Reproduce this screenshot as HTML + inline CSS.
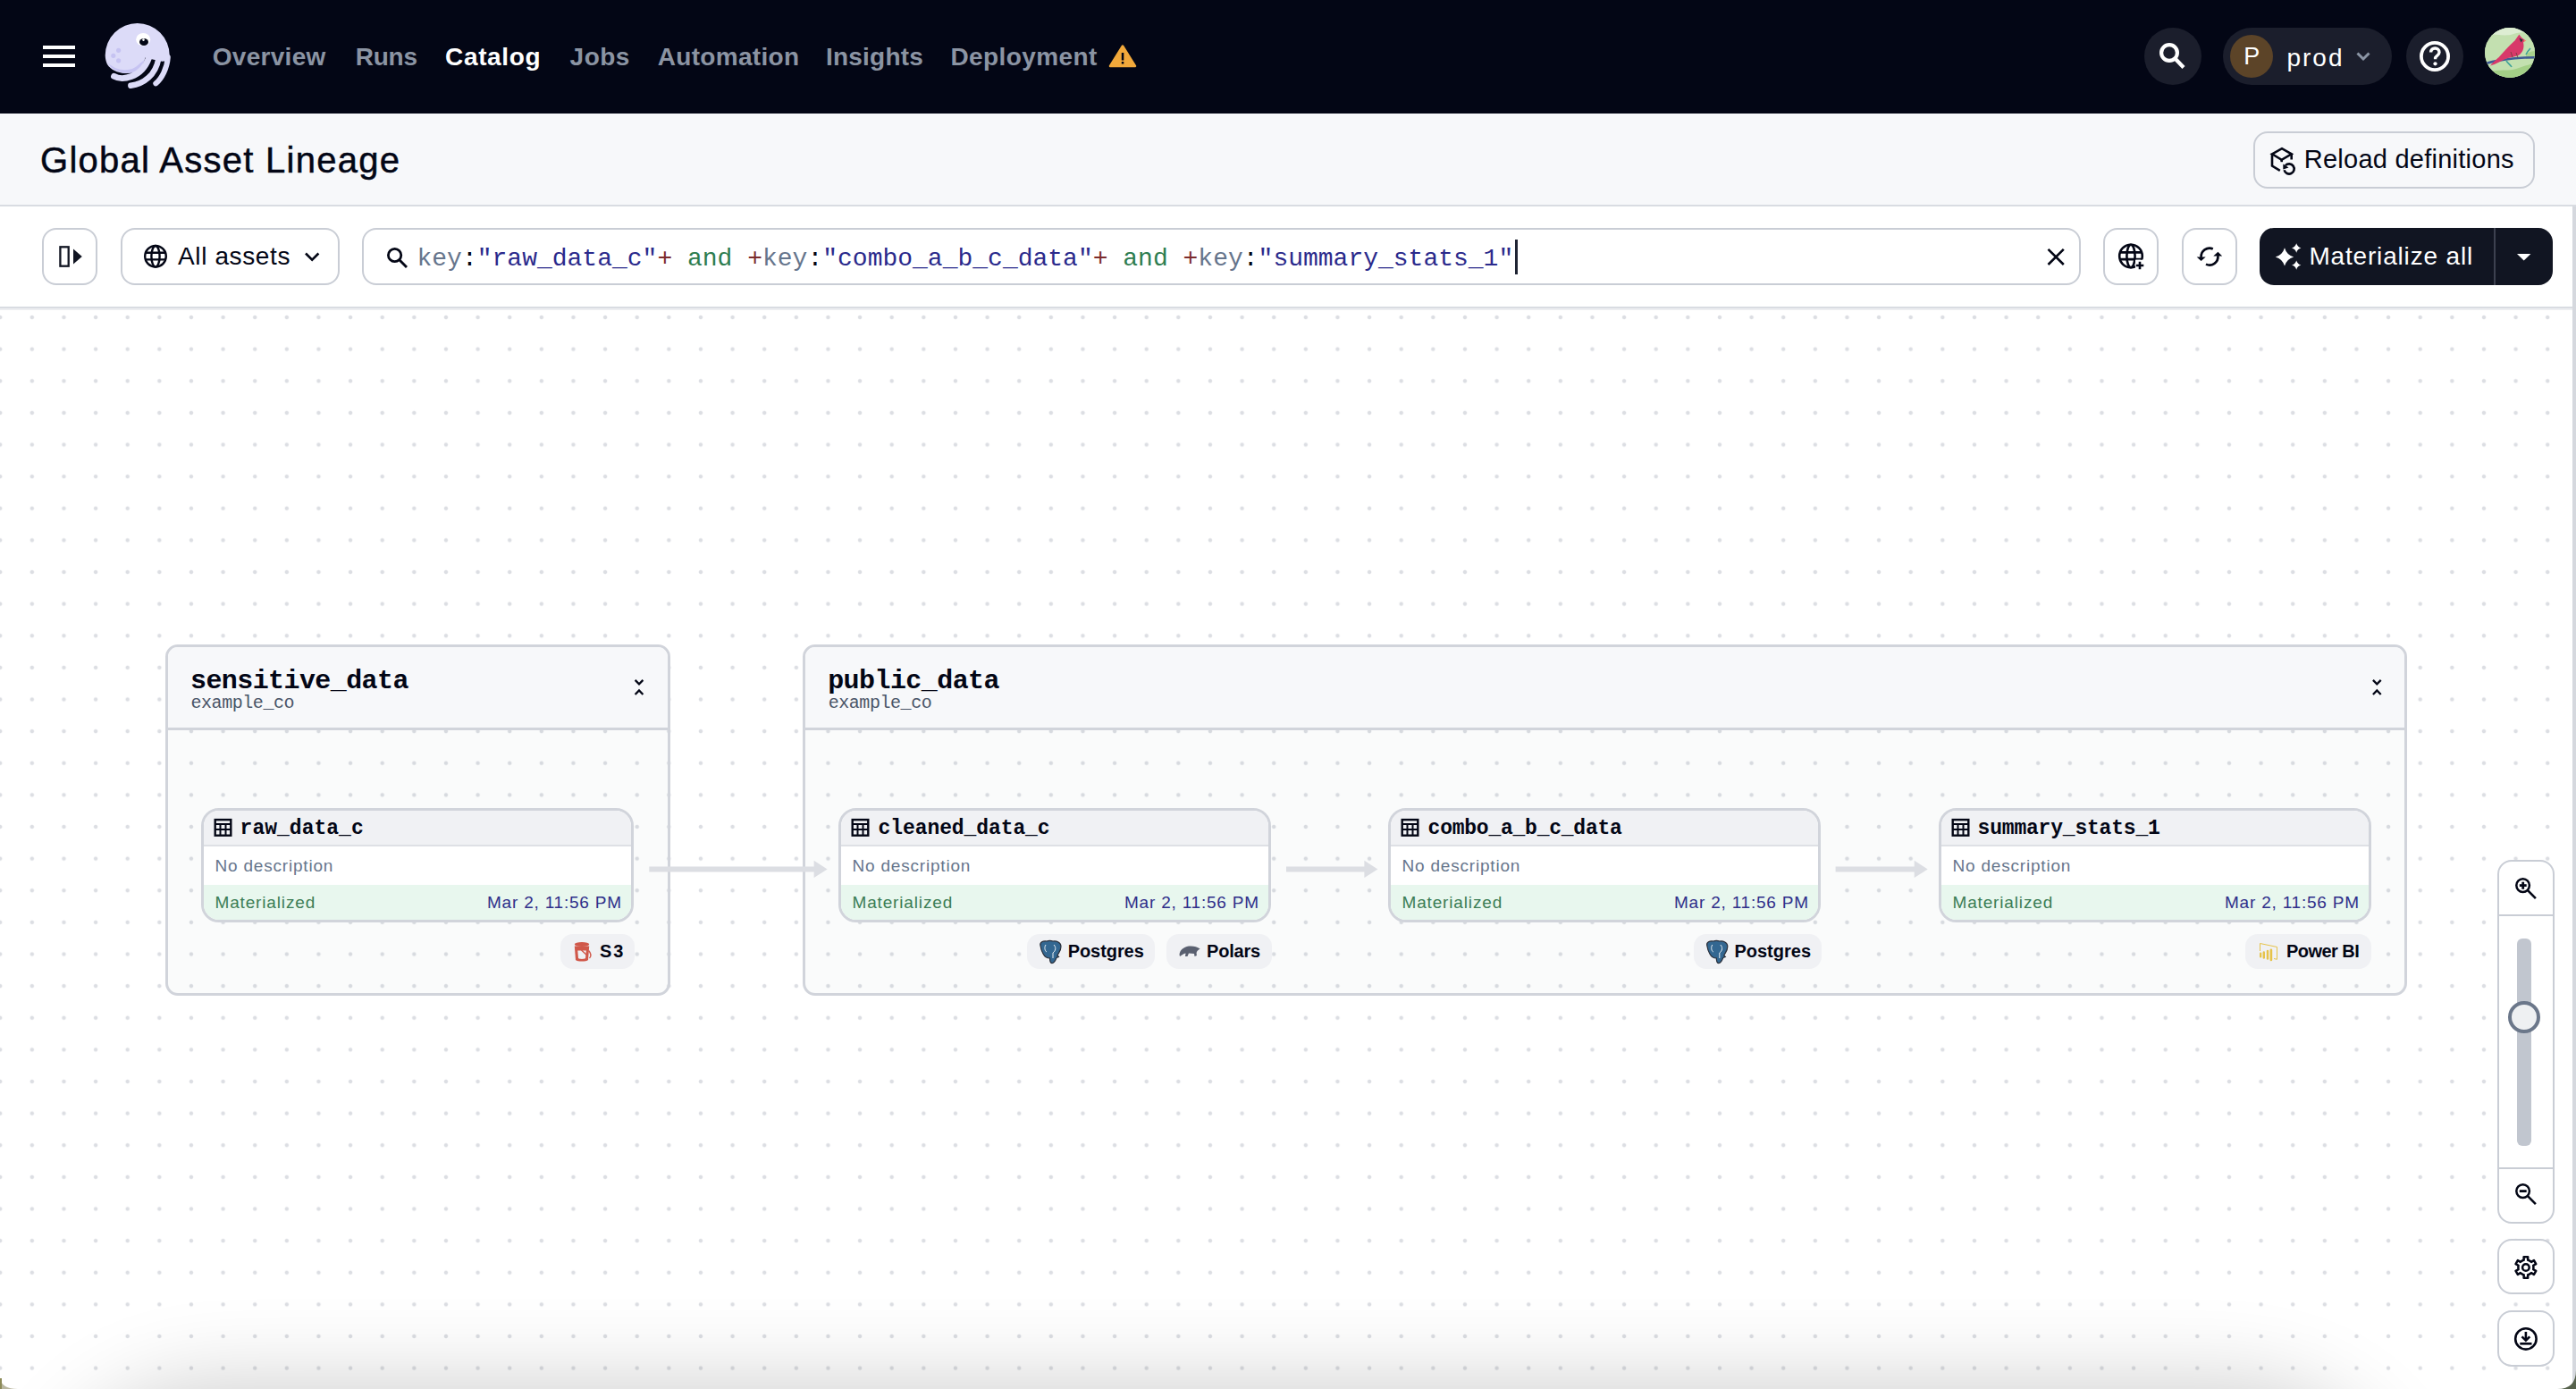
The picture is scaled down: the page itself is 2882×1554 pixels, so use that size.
<!DOCTYPE html><html><head><meta charset="utf-8"><style>
*{margin:0;padding:0;box-sizing:border-box}
html,body{width:2882px;height:1554px;overflow:hidden;background:#fff}
.t{position:absolute;white-space:pre}
.a{position:absolute}
</style></head><body>
<div class="a" style="left:0;top:0;width:2882px;height:127px;background:#030615"></div><div class="a" style="left:48px;top:51px;width:36px;height:4px;background:#fff"></div><div class="a" style="left:48px;top:61px;width:36px;height:4px;background:#fff"></div><div class="a" style="left:48px;top:71px;width:36px;height:4px;background:#fff"></div><div class="t" style="left:237.70px;top:50.29px;font-family:'Liberation Sans', sans-serif;font-weight:700;font-size:28px;line-height:28px;letter-spacing:0.300px;color:#8B94A3;">Overview</div><div class="t" style="left:397.70px;top:50.29px;font-family:'Liberation Sans', sans-serif;font-weight:700;font-size:28px;line-height:28px;letter-spacing:-0.233px;color:#8B94A3;">Runs</div><div class="t" style="left:498.00px;top:50.29px;font-family:'Liberation Sans', sans-serif;font-weight:700;font-size:28px;line-height:28px;letter-spacing:0.667px;color:#fff;">Catalog</div><div class="t" style="left:637.60px;top:50.29px;font-family:'Liberation Sans', sans-serif;font-weight:700;font-size:28px;line-height:28px;letter-spacing:0.467px;color:#8B94A3;">Jobs</div><div class="t" style="left:735.70px;top:50.29px;font-family:'Liberation Sans', sans-serif;font-weight:700;font-size:28px;line-height:28px;letter-spacing:0.322px;color:#8B94A3;">Automation</div><div class="t" style="left:924.00px;top:50.29px;font-family:'Liberation Sans', sans-serif;font-weight:700;font-size:28px;line-height:28px;letter-spacing:0.214px;color:#8B94A3;">Insights</div><div class="t" style="left:1063.50px;top:50.29px;font-family:'Liberation Sans', sans-serif;font-weight:700;font-size:28px;line-height:28px;letter-spacing:0.389px;color:#8B94A3;">Deployment</div><div class="a" style="left:2399px;top:31px;width:64px;height:64px;border-radius:32px;background:#1B1E2C"></div><div class="a" style="left:2487px;top:31px;width:189px;height:64px;border-radius:32px;background:#1B1E2C"></div><div class="a" style="left:2495px;top:39px;width:48px;height:48px;border-radius:24px;background:#5C4428"></div><div class="t" style="left:2510.30px;top:50.34px;font-family:'Liberation Sans', sans-serif;font-weight:400;font-size:27px;line-height:27px;letter-spacing:0.000px;color:#fff;">P</div><div class="t" style="left:2558.40px;top:50.89px;font-family:'Liberation Sans', sans-serif;font-weight:400;font-size:28px;line-height:28px;letter-spacing:2.033px;color:#fff;">prod</div><div class="a" style="left:2692px;top:31px;width:64px;height:64px;border-radius:32px;background:#1B1E2C"></div><div class="a" style="left:2780px;top:31px;width:56px;height:56px;border-radius:28px;background:radial-gradient(circle at 40% 30%,#DDEBD2 0,#C3E0B0 45%,#A6D08A 100%);overflow:hidden"></div><div class="a" style="left:0;top:127px;width:2882px;height:102px;background:#F7F8FA"></div><div class="a" style="left:0;top:229px;width:2882px;height:2px;background:#D9DCE2"></div><div class="t" style="left:45.00px;top:159.13px;font-family:'Liberation Sans', sans-serif;font-weight:400;font-size:40px;line-height:40px;letter-spacing:1.263px;color:#030615;-webkit-text-stroke:0.5px #030615;">Global Asset Lineage</div><div class="a" style="left:2521px;top:147px;width:315px;height:64px;border:2px solid #C9CDD5;border-radius:16px"></div><div class="t" style="left:2577.80px;top:164.45px;font-family:'Liberation Sans', sans-serif;font-weight:400;font-size:29px;line-height:29px;letter-spacing:0.247px;color:#030615;">Reload definitions</div><div class="a" style="left:0;top:343px;width:2882px;height:2px;background:#D9DCE2"></div><div class="a" style="left:0;top:345px;width:2882px;height:2px;background:#EDEEF1"></div><div class="a" style="left:46.5px;top:255px;width:62.5px;height:64px;border:2px solid #C9CDD5;border-radius:16px;background:#fff"></div><div class="a" style="left:134.5px;top:255px;width:245.5px;height:64px;border:2px solid #C9CDD5;border-radius:16px;background:#fff"></div><div class="a" style="left:405px;top:255px;width:1922.5px;height:64px;border:2px solid #C9CDD5;border-radius:16px;background:#fff"></div><div class="a" style="left:2353px;top:255px;width:62px;height:64px;border:2px solid #C9CDD5;border-radius:16px;background:#fff"></div><div class="a" style="left:2440.6px;top:255px;width:62.40000000000009px;height:64px;border:2px solid #C9CDD5;border-radius:16px;background:#fff"></div><div class="a" style="left:2528px;top:255px;width:328px;height:64px;border-radius:16px;background:#111522"></div><div class="a" style="left:2790px;top:255px;width:2px;height:64px;background:#3D4150"></div><div class="t" style="left:199.00px;top:273.19px;font-family:'Liberation Sans', sans-serif;font-weight:400;font-size:28px;line-height:28px;letter-spacing:0.622px;color:#030615;">All assets</div><div class="t" style="left:2583.40px;top:273.19px;font-family:'Liberation Sans', sans-serif;font-weight:400;font-size:28px;line-height:28px;letter-spacing:0.829px;color:#fff;">Materialize all</div><div class="t" style="left:466.50px;top:275.55px;font-family:'Liberation Mono', monospace;font-size:28px;line-height:28px"><span style="color:#66758C">key</span><span style="color:#030615">:</span><span style="color:#2B2A8C">"raw_data_c"</span><span style="color:#7C2C2C">+</span><span style="color:#2E7D50"> and </span><span style="color:#7C2C2C">+</span><span style="color:#66758C">key</span><span style="color:#030615">:</span><span style="color:#2B2A8C">"combo_a_b_c_data"</span><span style="color:#7C2C2C">+</span><span style="color:#2E7D50"> and </span><span style="color:#7C2C2C">+</span><span style="color:#66758C">key</span><span style="color:#030615">:</span><span style="color:#2B2A8C">"summary_stats_1"</span></div><div class="a" style="left:1695px;top:268px;width:2.5px;height:39px;background:#1F2433"></div><div class="a" style="left:0;top:345px;width:2882px;height:1209px;background-image:radial-gradient(circle at center,#DCDEE3 0,#DCDEE3 1.7px,rgba(220,222,227,0) 2.7px);background-size:35.64px 35.64px;background-position:-17.62px -7.82px"></div><div class="a" style="left:2878px;top:231px;width:4px;height:1323px;background:#D5D8DE"></div><div class="a" style="left:184.5px;top:720.5px;width:565.5px;height:393.0px;border:3px solid #D1D4DB;border-radius:14px;background:rgba(20,30,60,0.018);overflow:hidden"><div class="a" style="left:0;top:0;right:0;height:93.5px;background:#F7F8FA;border-bottom:3px solid #D1D4DB"></div></div><div class="t" style="left:213.00px;top:746.52px;font-family:'Liberation Mono', monospace;font-weight:700;font-size:30px;line-height:30px;letter-spacing:-0.585px;color:#030615;">sensitive_data</div><div class="t" style="left:213.50px;top:776.68px;font-family:'Liberation Mono', monospace;font-weight:400;font-size:20px;line-height:20px;letter-spacing:-0.444px;color:#4A5568;">example_co</div><div class="a" style="left:897.7px;top:720.5px;width:1795.3px;height:393.0px;border:3px solid #D1D4DB;border-radius:14px;background:rgba(20,30,60,0.018);overflow:hidden"><div class="a" style="left:0;top:0;right:0;height:93.5px;background:#F7F8FA;border-bottom:3px solid #D1D4DB"></div></div><div class="t" style="left:926.20px;top:746.52px;font-family:'Liberation Mono', monospace;font-weight:700;font-size:30px;line-height:30px;letter-spacing:-0.570px;color:#030615;">public_data</div><div class="t" style="left:926.70px;top:776.68px;font-family:'Liberation Mono', monospace;font-weight:400;font-size:20px;line-height:20px;letter-spacing:-0.444px;color:#4A5568;">example_co</div><div class="a" style="left:225px;top:904px;width:484px;height:128px;border:3px solid #D1D4DB;border-radius:20px;background:#fff;overflow:hidden"><div class="a" style="left:0;top:0;right:0;height:40px;background:#F0F1F4;border-bottom:2px solid #DEE0E5"></div><div class="a" style="left:0;top:82.5px;right:0;bottom:0;background:#E8F7EE"></div></div><div class="t" style="left:268.60px;top:916.38px;font-family:'Liberation Mono', monospace;font-weight:700;font-size:23px;line-height:23px;letter-spacing:0.011px;color:#030615;">raw_data_c</div><div class="t" style="left:240.50px;top:958.91px;font-family:'Liberation Sans', sans-serif;font-weight:400;font-size:19px;line-height:19px;letter-spacing:0.800px;color:#66758C;">No description</div><div class="t" style="left:240.50px;top:999.91px;font-family:'Liberation Sans', sans-serif;font-weight:400;font-size:19px;line-height:19px;letter-spacing:0.845px;color:#3B7D55;">Materialized</div><div class="t" style="left:545.00px;top:999.91px;font-family:'Liberation Sans', sans-serif;font-weight:400;font-size:19px;line-height:19px;letter-spacing:0.786px;color:#2F2F8A;">Mar 2, 11:56 PM</div><div class="a" style="left:627.3px;top:1045px;width:82.70000000000005px;height:39px;border-radius:14px;background:#F0F1F4"></div><div class="t" style="left:671.00px;top:1054.07px;font-family:'Liberation Sans', sans-serif;font-weight:700;font-size:20px;line-height:20px;letter-spacing:2.000px;color:#030615;">S3</div><div class="a" style="left:938px;top:904px;width:484px;height:128px;border:3px solid #D1D4DB;border-radius:20px;background:#fff;overflow:hidden"><div class="a" style="left:0;top:0;right:0;height:40px;background:#F0F1F4;border-bottom:2px solid #DEE0E5"></div><div class="a" style="left:0;top:82.5px;right:0;bottom:0;background:#E8F7EE"></div></div><div class="t" style="left:982.60px;top:916.38px;font-family:'Liberation Mono', monospace;font-weight:700;font-size:23px;line-height:23px;letter-spacing:-0.092px;color:#030615;">cleaned_data_c</div><div class="t" style="left:953.50px;top:958.91px;font-family:'Liberation Sans', sans-serif;font-weight:400;font-size:19px;line-height:19px;letter-spacing:0.800px;color:#66758C;">No description</div><div class="t" style="left:953.50px;top:999.91px;font-family:'Liberation Sans', sans-serif;font-weight:400;font-size:19px;line-height:19px;letter-spacing:0.845px;color:#3B7D55;">Materialized</div><div class="t" style="left:1258.00px;top:999.91px;font-family:'Liberation Sans', sans-serif;font-weight:400;font-size:19px;line-height:19px;letter-spacing:0.786px;color:#2F2F8A;">Mar 2, 11:56 PM</div><div class="a" style="left:1149.2px;top:1045px;width:142.79999999999995px;height:39px;border-radius:14px;background:#F0F1F4"></div><div class="t" style="left:1194.70px;top:1054.07px;font-family:'Liberation Sans', sans-serif;font-weight:700;font-size:20px;line-height:20px;letter-spacing:-0.071px;color:#030615;">Postgres</div><div class="a" style="left:1305px;top:1045px;width:118px;height:39px;border-radius:14px;background:#F0F1F4"></div><div class="t" style="left:1350.00px;top:1054.07px;font-family:'Liberation Sans', sans-serif;font-weight:700;font-size:20px;line-height:20px;letter-spacing:-0.200px;color:#030615;">Polars</div><div class="a" style="left:1553px;top:904px;width:484px;height:128px;border:3px solid #D1D4DB;border-radius:20px;background:#fff;overflow:hidden"><div class="a" style="left:0;top:0;right:0;height:40px;background:#F0F1F4;border-bottom:2px solid #DEE0E5"></div><div class="a" style="left:0;top:82.5px;right:0;bottom:0;background:#E8F7EE"></div></div><div class="t" style="left:1597.60px;top:916.38px;font-family:'Liberation Mono', monospace;font-weight:700;font-size:23px;line-height:23px;letter-spacing:-0.240px;color:#030615;">combo_a_b_c_data</div><div class="t" style="left:1568.50px;top:958.91px;font-family:'Liberation Sans', sans-serif;font-weight:400;font-size:19px;line-height:19px;letter-spacing:0.800px;color:#66758C;">No description</div><div class="t" style="left:1568.50px;top:999.91px;font-family:'Liberation Sans', sans-serif;font-weight:400;font-size:19px;line-height:19px;letter-spacing:0.845px;color:#3B7D55;">Materialized</div><div class="t" style="left:1873.00px;top:999.91px;font-family:'Liberation Sans', sans-serif;font-weight:400;font-size:19px;line-height:19px;letter-spacing:0.786px;color:#2F2F8A;">Mar 2, 11:56 PM</div><div class="a" style="left:1895px;top:1045px;width:142.70000000000005px;height:39px;border-radius:14px;background:#F0F1F4"></div><div class="t" style="left:1940.40px;top:1054.07px;font-family:'Liberation Sans', sans-serif;font-weight:700;font-size:20px;line-height:20px;letter-spacing:0.014px;color:#030615;">Postgres</div><div class="a" style="left:2169px;top:904px;width:484px;height:128px;border:3px solid #D1D4DB;border-radius:20px;background:#fff;overflow:hidden"><div class="a" style="left:0;top:0;right:0;height:40px;background:#F0F1F4;border-bottom:2px solid #DEE0E5"></div><div class="a" style="left:0;top:82.5px;right:0;bottom:0;background:#E8F7EE"></div></div><div class="t" style="left:2212.60px;top:916.38px;font-family:'Liberation Mono', monospace;font-weight:700;font-size:23px;line-height:23px;letter-spacing:-0.200px;color:#030615;">summary_stats_1</div><div class="t" style="left:2184.50px;top:958.91px;font-family:'Liberation Sans', sans-serif;font-weight:400;font-size:19px;line-height:19px;letter-spacing:0.800px;color:#66758C;">No description</div><div class="t" style="left:2184.50px;top:999.91px;font-family:'Liberation Sans', sans-serif;font-weight:400;font-size:19px;line-height:19px;letter-spacing:0.845px;color:#3B7D55;">Materialized</div><div class="t" style="left:2489.00px;top:999.91px;font-family:'Liberation Sans', sans-serif;font-weight:400;font-size:19px;line-height:19px;letter-spacing:0.786px;color:#2F2F8A;">Mar 2, 11:56 PM</div><div class="a" style="left:2511.8px;top:1045px;width:140.79999999999973px;height:39px;border-radius:14px;background:#F0F1F4"></div><div class="t" style="left:2557.90px;top:1054.07px;font-family:'Liberation Sans', sans-serif;font-weight:700;font-size:20px;line-height:20px;letter-spacing:-0.529px;color:#030615;">Power BI</div><div class="a" style="left:0;top:1300px;width:2882px;height:254px;overflow:hidden"><div class="a" style="left:90px;top:290px;width:2560px;height:300px;border-radius:150px;background:#000;box-shadow:0 0 100px 40px rgba(0,0,0,0.2)"></div></div><div class="a" style="left:2794px;top:962px;width:64px;height:407px;border:2px solid #C9CDD5;border-radius:16px;background:#fff"></div><div class="a" style="left:2796px;top:1023px;width:60px;height:2px;background:#C9CDD5"></div><div class="a" style="left:2796px;top:1306px;width:60px;height:2px;background:#C9CDD5"></div><div class="a" style="left:2816px;top:1049.5px;width:16px;height:232px;border-radius:6px;background:#C1C6CF"></div><div class="a" style="left:2806px;top:1120px;width:36px;height:36px;border-radius:18px;background:#EEF0F2;border:4px solid #6B778A"></div><div class="a" style="left:2794px;top:1386px;width:64px;height:62px;border:2px solid #C9CDD5;border-radius:16px;background:#fff"></div><div class="a" style="left:2794px;top:1465.6px;width:64px;height:63.200000000000045px;border:2px solid #C9CDD5;border-radius:16px;background:#fff"></div>
<svg class="a" style="left:0;top:0" width="2882" height="1554" viewBox="0 0 2882 1554"><path d="M117.7 62 A36 36 0 0 1 189.7 62 L188 68 L181.3 68.8 L172 66.8 L162.5 64.5 C160 76 150 82.5 140 82 C131 81.5 124 78 120 72 C118.5 69 117.8 65 117.7 62 Z" fill="#DCDBF8"/><path d="M120.5 70 C126 80 138 83 148 81.5 C155 80 159 74 161.5 67 C157 70 154 74 149 76.5 C140 80 128 78 120.5 70 Z" fill="#C6C3F2"/><path d="M127.5 85.3 C136 90 158 88 166.5 65" fill="none" stroke="#DCDBF8" stroke-width="6.8" stroke-linecap="round"/><path d="M146.3 95.8 C161 94 174 84 177.3 66" fill="none" stroke="#DCDBF8" stroke-width="6.4" stroke-linecap="round"/><path d="M174.3 93.3 C181 88 187 76 187.8 64" fill="none" stroke="#DCDBF8" stroke-width="6" stroke-linecap="round"/><circle cx="132.6" cy="56.3" r="2.6" fill="#C6C3F2"/><circle cx="126.8" cy="62.3" r="2.6" fill="#C6C3F2"/><circle cx="132.6" cy="67.8" r="2.6" fill="#C6C3F2"/><ellipse cx="160.2" cy="44.2" rx="8" ry="7.2" fill="#fff"/><ellipse cx="161" cy="47" rx="5" ry="4" fill="#030615"/><circle cx="160.5" cy="44.6" r="1.3" fill="#fff"/><path d="M1256 51.5 L1270 74 L1242 74 Z" fill="#F2A93B" stroke="#F2A93B" stroke-width="2.5" stroke-linejoin="round"/><rect x="1254.8" y="59" width="2.5" height="8.5" fill="#030615"/><rect x="1254.8" y="69" width="2.5" height="2.5" fill="#030615"/><circle cx="2427" cy="59" r="8.9" fill="none" stroke="#fff" stroke-width="4.2"/><path d="M2433 65 L2443 75.5" stroke="#fff" stroke-width="4.3"/><path d="M2637.5 59.5 L2644 66 L2650.5 59.5" fill="none" stroke="#8B95A5" stroke-width="3"/><circle cx="2724" cy="63" r="15.1" fill="none" stroke="#fff" stroke-width="3.8"/><path d="M2719.6 58.6 C2719.6 55.5 2721.8 54 2724.3 54 C2727 54 2729 55.8 2729 58.4 C2729 61.5 2726 62 2724.6 64.5 L2724.6 66.3" fill="none" stroke="#fff" stroke-width="3.4"/><circle cx="2724.5" cy="71.3" r="2.1" fill="#fff"/><clipPath id="av"><circle cx="2808" cy="59" r="28"/></clipPath><g clip-path="url(#av)"><rect x="2780" y="31" width="56" height="56" fill="#C3E0B0"/><path d="M2780 40 C2792 36 2800 42 2812 38 C2822 35 2830 37 2836 33 L2836 31 L2780 31 Z" fill="#DDEDD3"/><path d="M2780 82 C2792 76 2806 81 2818 76 C2826 73 2832 72 2836 70 L2836 87 L2780 87 Z" fill="#A3CF87"/><path d="M2826 60 C2830 58 2834 57 2836 57 L2836 66 L2826 66 Z" fill="#A9D28E"/><path d="M2781 71 C2795 67 2815 64.5 2836 64.3" fill="none" stroke="#3D5A94" stroke-width="2.6"/><path d="M2786 73.5 C2789 70 2793 67 2797.5 62 C2803 56 2808 50 2813.5 45.5 L2818.4 38.6 L2821 42 L2825.3 45.2 L2823 47.5 C2824.5 53 2822.5 59 2817.5 62 C2811 64.5 2805 64.5 2800 67.5 C2795 70 2790 72.5 2786 73.5 Z" fill="#D8386A"/><path d="M2818.5 42.5 L2822.5 44.5 L2820.5 47.5 Z" fill="#1E3A3A"/><path d="M2824 44.5 L2826.5 45.5 L2823.5 47 Z" fill="#F08A6A"/><path d="M2809 58 L2811 64 M2815 59 L2817 64.5" stroke="#6B3A3A" stroke-width="0.8"/><path d="M2804 68 C2806 71 2809 73 2810 75 M2826 61 C2828 57 2830 55 2831 54" stroke="#3FA39A" stroke-width="1.6"/></g><g transform="translate(2540,165)" fill="none" stroke="#030615" stroke-width="2.6" stroke-linejoin="miter"><path d="M2 7.3 L13 1.2 L23.7 7.3 L12.7 13.8 Z"/><path d="M2 7.3 L2 20.6 L10.8 25.8"/><path d="M12.7 13.8 L12.7 16.2"/><path d="M23.7 7.3 L23.7 13.5"/><path d="M16.9 20.2 A5.6 5.6 0 1 1 15.6 25.2"/></g><path d="M2554.3 183.5 L2554.3 189.5 L2560.5 187.5 Z" fill="#030615"/><rect x="67.4" y="276.3" width="9.3" height="21.4" fill="none" stroke="#111522" stroke-width="2.3"/><path d="M82 278.4 L91.8 287 L82 295.6 Z" fill="#111522"/><g fill="none" stroke="#030615" stroke-width="2.4"><circle cx="174" cy="286.8" r="11.8"/><ellipse cx="174" cy="286.8" rx="4.6" ry="11.8"/><path d="M162.2 282.7 H185.8 M162.2 290.40000000000003 H185.8"/></g><path d="M342 283.5 L349.2 290.7 L356.4 283.5" fill="none" stroke="#030615" stroke-width="2.6"/><circle cx="441.6" cy="285.5" r="7.2" fill="none" stroke="#030615" stroke-width="2.75"/><path d="M446.8 290.8 L455 299" stroke="#030615" stroke-width="2.9"/><path d="M2291.5 278.8 L2308.8 296 M2308.8 278.8 L2291.5 296" stroke="#030615" stroke-width="2.6"/><clipPath id="gp"><path d="M2360 260 H2410 V290.5 H2389 V310 H2360 Z"/></clipPath><g clip-path="url(#gp)"><g fill="none" stroke="#030615" stroke-width="2.6"><circle cx="2384" cy="286.5" r="12.8"/><ellipse cx="2384" cy="286.5" rx="4.6" ry="12.8"/><path d="M2371.2 282.4 H2396.8 M2371.2 290.1 H2396.8"/></g></g><path d="M2389.8 297 H2398.3 M2394 292.8 V301.2" stroke="#030615" stroke-width="2.6"/><g fill="none" stroke="#030615" stroke-width="2.7"><path d="M2475.8 278.5 A9.4 9.4 0 0 0 2462.6 287.8"/><path d="M2481.4 286.2 A9.4 9.4 0 0 1 2468 295.6"/></g><path d="M2457.7 287.4 L2467.7 287.4 L2462.6 292 Z M2476.3 286.5 L2486.2 286.5 L2481.4 281.8 Z" fill="#030615"/><path d="M2556 277.2 Q2558.244 285.15599999999995 2566.2 287.4 Q2558.244 289.644 2556 297.59999999999997 Q2553.756 289.644 2545.8 287.4 Q2553.756 285.15599999999995 2556 277.2 Z M2569.2 272.3 Q2570.3439999999996 276.356 2574.3999999999996 277.5 Q2570.3439999999996 278.644 2569.2 282.7 Q2568.056 278.644 2564.0 277.5 Q2568.056 276.356 2569.2 272.3 Z M2569.2 291.40000000000003 Q2570.3439999999996 295.456 2574.3999999999996 296.6 Q2570.3439999999996 297.744 2569.2 301.8 Q2568.056 297.744 2564.0 296.6 Q2568.056 295.456 2569.2 291.40000000000003 Z" fill="#fff"/><path d="M2816 284 L2831.4 284 L2823.7 291.4 Z" fill="#fff"/><path d="M726.3 972.4 H912" stroke="#DCDEE3" stroke-width="6"/><path d="M910.6 962.8 L925.6 972.4 L910.6 982 Z" fill="#DCDEE3"/><path d="M1439 972.4 H1527" stroke="#DCDEE3" stroke-width="6"/><path d="M1526.4 962.8 L1541.4 972.4 L1526.4 982 Z" fill="#DCDEE3"/><path d="M2053.6 972.4 H2143" stroke="#DCDEE3" stroke-width="6"/><path d="M2141.7 962.8 L2156.7 972.4 L2141.7 982 Z" fill="#DCDEE3"/><g fill="none" stroke="#030615" stroke-width="2.3" transform="translate(0,0)"><path d="M710.6 760.9 L715 765.3 L719.4 760.9"/><path d="M710.6 777 L715 772.5 L719.4 777"/></g><g fill="none" stroke="#030615" stroke-width="2.3" transform="translate(1944.2999999999997,0)"><path d="M710.6 760.9 L715 765.3 L719.4 760.9"/><path d="M710.6 777 L715 772.5 L719.4 777"/></g><g transform="translate(239.5,915.9)"><rect x="1.2" y="1.2" width="17.6" height="17.6" fill="none" stroke="#030615" stroke-width="2.4"/><path d="M1 6.2 H19 M1 12.2 H19 M7 6 V19 M13 6 V19" stroke="#030615" stroke-width="2"/></g><g transform="translate(952.5,915.9)"><rect x="1.2" y="1.2" width="17.6" height="17.6" fill="none" stroke="#030615" stroke-width="2.4"/><path d="M1 6.2 H19 M1 12.2 H19 M7 6 V19 M13 6 V19" stroke="#030615" stroke-width="2"/></g><g transform="translate(1567.5,915.9)"><rect x="1.2" y="1.2" width="17.6" height="17.6" fill="none" stroke="#030615" stroke-width="2.4"/><path d="M1 6.2 H19 M1 12.2 H19 M7 6 V19 M13 6 V19" stroke="#030615" stroke-width="2"/></g><g transform="translate(2183.5,915.9)"><rect x="1.2" y="1.2" width="17.6" height="17.6" fill="none" stroke="#030615" stroke-width="2.4"/><path d="M1 6.2 H19 M1 12.2 H19 M7 6 V19 M13 6 V19" stroke="#030615" stroke-width="2"/></g><g fill="#D0584A"><ellipse cx="651" cy="1056.5" rx="8.2" ry="2.5"/><path d="M642.8 1058.5 L659.2 1058.5 L658 1074 C656 1076 646 1076 644 1074 Z"/></g><path d="M646.3 1063.5 L655.8 1063.5 L655 1072 C653 1073.2 649 1073.2 647 1072 Z" fill="#F0F1F4"/><path d="M650.5 1063 L657 1069 M658.5 1063.5 C661 1066 662 1070 659.5 1072" fill="none" stroke="#D0584A" stroke-width="1.5"/><g transform="translate(1162,1052)"><path d="M2 6 C1 2 5 0.5 9 1 C11 0.3 14 0.3 16 1 C20 0.5 25 2 25 7 C25 12 22 14 21 17 L22.5 18.5 L20 19.5 C19 22 18 25 15.5 25.5 C13 26 12.5 23 12.5 20 C10 20 7 19 5 15 C3 12 2.5 9 2 6 Z" fill="#336791" stroke="#2A2F3A" stroke-width="1.2"/><path d="M8 5 C6 8 7 12 9 13 M17 5 C20 8 19 12 16 14 L16 20" fill="none" stroke="#fff" stroke-width="0.9"/></g><g transform="translate(1907.8,1052)"><path d="M2 6 C1 2 5 0.5 9 1 C11 0.3 14 0.3 16 1 C20 0.5 25 2 25 7 C25 12 22 14 21 17 L22.5 18.5 L20 19.5 C19 22 18 25 15.5 25.5 C13 26 12.5 23 12.5 20 C10 20 7 19 5 15 C3 12 2.5 9 2 6 Z" fill="#336791" stroke="#2A2F3A" stroke-width="1.2"/><path d="M8 5 C6 8 7 12 9 13 M17 5 C20 8 19 12 16 14 L16 20" fill="none" stroke="#fff" stroke-width="0.9"/></g><path d="M1319.5 1068 C1320 1063 1324 1059.5 1330 1058.5 C1335 1058 1339 1059 1342.6 1061.5 L1340.5 1063 C1339 1064 1338 1066 1339 1069 L1336.5 1070 L1336 1067 L1330 1066.5 L1328.5 1070 L1326 1070 L1326.5 1066.5 C1324 1067 1322 1068.5 1320 1070 Z" fill="#5A6070"/><g fill="#E6C349"><rect x="2528" y="1065.5" width="2.3" height="6" rx="1.1"/><rect x="2531.6" y="1064.2" width="2.4" height="8.5" rx="1.2"/><rect x="2535.8" y="1062.8" width="2.4" height="11" rx="1.2"/><rect x="2539.6" y="1061.4" width="2.6" height="13.8" rx="1.3"/></g><path d="M2528.5 1064 V1055.5 L2547.5 1059.5 V1073.3 L2544 1072.5" fill="none" stroke="#E6C349" stroke-width="1"/><g fill="none" stroke="#030615" stroke-width="2.5"><circle cx="2822.6" cy="990.6" r="7.3"/><path d="M2828.0 996.2 L2836.9 1005.1" stroke-width="2.6"/><path d="M2818.7999999999997 990.6 H2826.7" stroke-width="2.8"/><path d="M2822.7 986.7 V994.8000000000001" stroke-width="2.8"/></g><g fill="none" stroke="#030615" stroke-width="2.5"><circle cx="2822.6" cy="1332.6" r="7.3"/><path d="M2828.0 1338.1999999999998 L2836.9 1347.1" stroke-width="2.6"/><path d="M2818.7999999999997 1332.6 H2826.7" stroke-width="2.8"/></g><path d="M2823.67 1409.69 L2823.61 1406.22 L2828.19 1406.22 L2828.13 1409.69 L2828.84 1409.92 L2831.43 1411.41 L2831.98 1411.92 L2834.96 1410.13 L2837.25 1414.09 L2834.21 1415.77 L2834.37 1416.51 L2834.37 1419.49 L2834.21 1420.23 L2837.25 1421.91 L2834.96 1425.87 L2831.98 1424.08 L2831.43 1424.59 L2828.84 1426.08 L2828.13 1426.31 L2828.19 1429.78 L2823.61 1429.78 L2823.67 1426.31 L2822.96 1426.08 L2820.37 1424.59 L2819.82 1424.08 L2816.84 1425.87 L2814.55 1421.91 L2817.59 1420.23 L2817.43 1419.49 L2817.43 1416.51 L2817.59 1415.77 L2814.55 1414.09 L2816.84 1410.13 L2819.82 1411.92 L2820.37 1411.41 L2822.96 1409.92 Z" fill="none" stroke="#030615" stroke-width="2.5" stroke-linejoin="round"/><circle cx="2825.9" cy="1418" r="3.8" fill="none" stroke="#030615" stroke-width="2.5"/><g fill="none" stroke="#030615" stroke-width="2.6"><circle cx="2825.9" cy="1497.9" r="11.7"/><path d="M2825.9 1490 V1499.5"/><path d="M2821.5 1495.3 L2825.9 1499.7 L2830.3 1495.3"/><path d="M2819.3 1503.3 H2832.5"/></g><path d="M0 1542 Q2 1554 20 1554 L0 1554 Z" fill="#B9B7A0"/><rect x="0" y="1542" width="2" height="12" fill="#8C8A58"/><path d="M2882 1533 Q2882 1554 2861 1554 L2882 1554 Z" fill="#56624C"/></svg>
</body></html>
